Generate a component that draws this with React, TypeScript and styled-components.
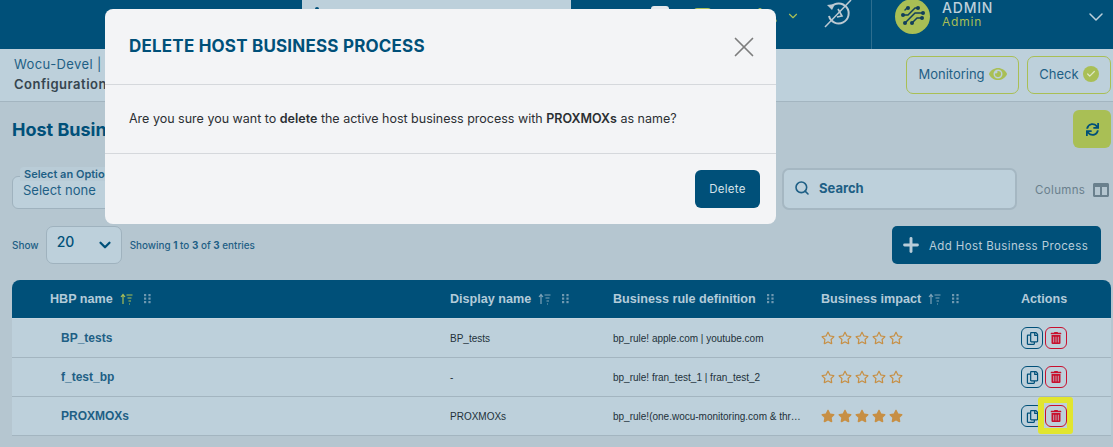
import React from "react";
import styled, { createGlobalStyle } from "styled-components";
import { Check, ChevronDown, Plus, Search, X } from "lucide-react";
import { FaEye, FaRegCopy, FaRegStar, FaStar, FaSync, FaTrashAlt, FaColumns } from "react-icons/fa";

const navy = "#005079";
const lime = "#a9bf55";
const sans = `"Inter", "Liberation Sans", sans-serif`;
const arial = `"Liberation Sans", Arial, sans-serif`;

const GlobalStyle = createGlobalStyle`
  html, body { margin: 0; padding: 0; background: #b5c6d0; }
  body { font-family: ${sans}; overflow: hidden; }
  * { box-sizing: border-box; }
`;

const Page = styled.div`
  position: relative;
  width: 1113px;
  height: 447px;
  overflow: hidden;
`;

const TopBar = styled.header`
  height: 49px;
  background: ${navy};
  display: flex;
  align-items: flex-start;
  padding-left: 302px;
`;

const TopSearch = styled.div`
  width: 269px;
  height: 9px;
  background: #bdd0db;
  margin-right: 80px;
  display: flex;
  align-items: flex-end;
  padding-left: 13px;
`;

const TopSearchIcon = styled.span`
  width: 4px;
  height: 2px;
  border-radius: 2px 2px 0 0;
  background: ${navy};
`;

const TopIcons = styled.div`
  width: 220px;
  height: 49px;
  display: flex;
  align-items: flex-start;
  padding-top: 6px;
  color: ${lime};
`;

const TopSquare = styled.span<{ $color: string; $width: number; $gap: number; $top: number }>`
  width: ${(p) => p.$width}px;
  height: 12px;
  margin-top: ${(p) => p.$top}px;
  margin-right: ${(p) => p.$gap}px;
  border-radius: 3px;
  background: ${(p) => p.$color};
`;

const TopStar = styled.span`
  display: flex;
  margin: 0 8px 0 31px;
`;

const TopChevron = styled.span`
  display: flex;
  margin: 3px 24px 0 0;
`;

const ThresholdIcon = styled.svg`
  width: 28px;
  height: 28px;
  margin-top: -6px;
  color: #bcc9d2;
`;

const UserBox = styled.div`
  width: 242px;
  height: 49px;
  border-left: 1px solid #2d6e8f;
  display: flex;
  align-items: flex-start;
  padding-left: 23px;
`;

const Avatar = styled.div`
  width: 35px;
  height: 35px;
  margin-top: -1px;
  border-radius: 50%;
  background: ${lime};
  display: flex;
`;

const UserText = styled.div`
  margin-left: 12px;
  width: 142px;
  letter-spacing: 0.8px;
`;

const UserName = styled.div`
  font-size: 14px;
  line-height: 15px;
  font-weight: 500;
  color: #bdd0db;
`;

const UserRole = styled.div`
  font-size: 12px;
  line-height: 14px;
  color: ${lime};
`;

const UserChevron = styled.span`
  display: flex;
  margin-top: 5px;
  color: #bdd0db;
`;

const SubHeader = styled.div`
  height: 53px;
  background: #bdd0db;
  border-bottom: 1px solid #a3b5c0;
  display: flex;
  justify-content: space-between;
  padding: 7px 2px 0 14px;
`;

const CrumbTop = styled.div`
  font-size: 13px;
  line-height: 16px;
  color: #1e5f85;
  letter-spacing: 0.4px;
`;

const CrumbBold = styled.div`
  font-size: 13px;
  line-height: 16px;
  margin-top: 4px;
  font-weight: 600;
  color: #36454f;
  letter-spacing: 0.5px;
`;

const HeaderActions = styled.div`
  display: flex;
  gap: 8px;
`;

const OutlineButton = styled.button<{ $width: number }>`
  width: ${(p) => p.$width}px;
  height: 38px;
  border: 1px solid ${lime};
  border-radius: 7px;
  background: transparent;
  display: flex;
  align-items: center;
  justify-content: center;
  gap: 4px;
  padding: 0 0 2px;
  font-family: ${sans};
  font-size: 13px;
  color: #1e5f85;
`;

const CheckDot = styled.span`
  width: 16px;
  height: 16px;
  border-radius: 50%;
  background: ${lime};
  display: flex;
  align-items: center;
  justify-content: center;
  color: #dfe8c5;
`;

const Content = styled.main`
  padding: 8px 2px 0 12px;
`;

const TitleRow = styled.div`
  display: flex;
  justify-content: space-between;
  height: 38px;
`;

const Title = styled.h1`
  margin: 10px 0 0;
  font-size: 18px;
  line-height: 20px;
  font-weight: 700;
  color: ${navy};
`;

const RefreshButton = styled.button`
  width: 38px;
  height: 38px;
  border: 0;
  border-radius: 6px;
  background: ${lime};
  display: flex;
  align-items: center;
  justify-content: center;
  color: ${navy};
  padding: 0;
`;

const FilterRow = styled.div`
  margin-top: 20px;
  height: 42px;
  display: flex;
  align-items: flex-end;
`;

const OptionSelect = styled.div`
  position: relative;
  width: 200px;
  height: 33px;
  margin: 0 570px 1px 0;
  border: 1px solid #9fb2be;
  border-radius: 6px;
  background: #bdd0db;
  padding: 5px 10px;
  font-size: 13px;
  line-height: 16px;
  color: #1e5f85;
`;

const FloatLabel = styled.span`
  position: absolute;
  left: 7px;
  top: -10px;
  padding: 0 4px;
  font-size: 11px;
  line-height: 14px;
  font-weight: 600;
  white-space: nowrap;
  color: #1e5f85;
  background: #b9ccd7;
  border-radius: 4px 4px 0 0;
`;

const SearchBox = styled.div`
  width: 235px;
  height: 42px;
  border: 2px solid #a5b7c2;
  border-radius: 7px;
  background: #bdd0db;
  display: flex;
  align-items: center;
  gap: 9px;
  padding: 0 0 2px 10px;
  font-size: 13px;
  font-weight: 700;
  color: #1e5f85;
  margin-right: 18px;
`;

const ColumnsToggle = styled.div`
  height: 42px;
  display: flex;
  align-items: center;
  gap: 8px;
  padding-top: 2px;
  font-size: 11.5px;
  color: #6a808d;
  letter-spacing: 0.35px;
`;

const ToolRow = styled.div`
  margin-top: 16px;
  height: 38px;
  display: flex;
  align-items: center;
  padding-right: 10px;
`;

const ShowLabel = styled.span`
  font-size: 10px;
  font-weight: 500;
  color: #1e5f85;
  margin-right: 7px;
`;

const PageSize = styled.div`
  width: 76px;
  height: 38px;
  border: 1px solid #9fb2be;
  border-radius: 7px;
  background: #bdd0db;
  display: flex;
  align-items: center;
  justify-content: space-between;
  padding: 0 7px 0 10px;
  font-size: 14px;
  font-weight: 500;
  color: ${navy};
  margin-right: 8px;
`;

const PageSizeValue = styled.span`
  margin-top: -7px;
`;

const Entries = styled.span`
  font-size: 9.9px;
  font-weight: 500;
  color: #1e5f85;
  b {
    font-weight: 700;
  }
`;

const AddButton = styled.button`
  margin-left: auto;
  width: 209px;
  height: 38px;
  border: 0;
  border-radius: 5px;
  background: ${navy};
  display: flex;
  align-items: center;
  gap: 7px;
  padding: 0 0 0 8px;
  font-family: ${sans};
  font-size: 11.5px;
  color: #b9cdd9;
  letter-spacing: 0.38px;
`;

const AddLabel = styled.span`
  margin-top: 2px;
`;

const Table = styled.div`
  margin-top: 16px;
`;

const grid = `
  display: grid;
  grid-template-columns: 438px 163px 208px 200px 90px;
`;

const HeadRow = styled.div`
  ${grid}
  height: 39px;
  align-items: center;
  background: ${navy};
  border-bottom: 1px solid #c5d6e0;
  border-radius: 8px 8px 0 0;
`;

const HeadCell = styled.div<{ $first?: boolean }>`
  display: flex;
  align-items: center;
  padding-left: ${(p) => (p.$first ? 38 : 0)}px;
  font-family: ${arial};
  font-size: 12.6px;
  font-weight: 700;
  color: #b3cbd9;
`;

const SortIcon = styled.svg<{ $active?: boolean }>`
  width: 13px;
  height: 12px;
  margin-left: 7px;
  color: ${(p) => (p.$active ? lime : "#7ea3b8")};
`;

const DragIcon = styled.svg`
  width: 7px;
  height: 10px;
  margin-left: 11px;
  color: #6f99b1;
`;

const Row = styled.div`
  ${grid}
  height: 39px;
  align-items: center;
  background: #bdd0db;
  border-bottom: 1px solid #a3b5c0;
`;

const NameCell = styled.div`
  padding-left: 49px;
  font-family: ${arial};
  font-size: 12px;
  font-weight: 700;
  color: #1e5f85;
`;

const TextCell = styled.div`
  font-family: ${arial};
  font-size: 10px;
  color: #22303a;
`;

const Stars = styled.div`
  display: flex;
  gap: 3px;
  color: #c78f44;
`;

const Actions = styled.div`
  display: flex;
  gap: 2px;
`;

const ActionButton = styled.span<{ $color: string; $flag?: boolean }>`
  position: relative;
  width: 22px;
  height: 22px;
  border: 1px solid ${(p) => p.$color};
  border-radius: 6px;
  color: ${(p) => p.$color};
  display: flex;
  align-items: center;
  justify-content: center;
  ${(p) =>
    p.$flag &&
    `&::before {
      content: "";
      position: absolute;
      left: -8px;
      right: -7px;
      top: -9px;
      bottom: -8px;
      border: 6px solid #e1e52f;
      border-radius: 3px;
    }`}
`;

const Modal = styled.section`
  position: absolute;
  left: 105px;
  top: 9px;
  width: 671px;
  height: 215px;
  border-radius: 8px;
  background: #f3f4f6;
`;

const ModalHead = styled.div`
  height: 76px;
  border-bottom: 1px solid #d5d8dc;
  display: flex;
  justify-content: space-between;
  align-items: center;
  padding: 0 15px 0 24px;
`;

const ModalTitle = styled.h2`
  margin: -2px 0 0;
  font-size: 17px;
  font-weight: 700;
  color: ${navy};
  letter-spacing: 0.2px;
`;

const CloseButton = styled.span`
  display: flex;
  color: #7d7d7d;
`;

const ModalBody = styled.div`
  height: 69px;
  border-bottom: 1px solid #d5d8dc;
  display: flex;
  align-items: center;
  padding: 0 0 2px 24px;
  font-size: 12.5px;
  color: #2b2f33;
  b {
    font-weight: 600;
  }
`;

const ModalFoot = styled.div`
  display: flex;
  justify-content: flex-end;
  padding: 16px 16px 0 0;
`;

const DeleteButton = styled.button`
  width: 65px;
  height: 38px;
  border: 0;
  border-radius: 6px;
  background: ${navy};
  color: #d6e2ea;
  font-family: ${sans};
  font-size: 11.5px;
  letter-spacing: 0.3px;
  padding: 0;
`;

const SortGlyph = ({ active }: { active?: boolean }) => (
  <SortIcon $active={active} viewBox="0 0 13 12" fill="none" stroke="currentColor" strokeWidth="1.2">
    <path d="M3 11V2M1 4l2-2.5L5 4" />
    <path d="M6.5 2h6M7.5 5h4M8.5 8h2.5M9 11h1" />
  </SortIcon>
);

const DragGlyph = () => (
  <DragIcon viewBox="0 0 7 10" fill="currentColor">
    {[0, 3.5, 7].map((y) => (
      <React.Fragment key={y}>
        <rect x="0" y={y} width="2.2" height="2.2" />
        <rect x="4.4" y={y} width="2.2" height="2.2" />
      </React.Fragment>
    ))}
  </DragIcon>
);

const Logo = () => (
  <svg width="35" height="35" viewBox="0 0 35 35" fill="none" stroke="#123f5b" strokeWidth="1.5" strokeLinecap="round" strokeLinejoin="round">
    <path d="M8 16h5l7-7h3" />
    <path d="M10 24l10-10h8" />
    <path d="M17 24l5-5h5" />
    <path d="M12 9l-2 2" />
    <g fill="#123f5b" stroke="none">
      <circle cx="13" cy="9" r="2" />
      <circle cx="23" cy="9" r="2" />
      <circle cx="28" cy="14" r="2" />
      <circle cx="8" cy="16" r="2" />
      <circle cx="10" cy="24" r="2" />
      <circle cx="17" cy="24" r="2" />
      <circle cx="27" cy="19" r="2" />
    </g>
  </svg>
);

const rows = [
  { name: "BP_tests", display: "BP_tests", rule: "bp_rule! apple.com | youtube.com", filled: false },
  { name: "f_test_bp", display: "-", rule: "bp_rule! fran_test_1 | fran_test_2", filled: false },
  { name: "PROXMOXs", display: "PROXMOXs", rule: "bp_rule!(one.wocu-monitoring.com & thr…", filled: true },
];

export default function App() {
  return (
    <Page>
      <GlobalStyle />
      <TopBar>
        <TopSearch>
          <TopSearchIcon />
        </TopSearch>
        <TopIcons>
          <TopSquare $color="#e6e9ec" $width={18} $gap={25} $top={0} />
          <TopSquare $color={lime} $width={17} $gap={0} $top={2} />
          <TopStar>
            <FaStar size={36} />
          </TopStar>
          <TopChevron>
            <ChevronDown size={14} />
          </TopChevron>
          <ThresholdIcon viewBox="0 0 28 28" fill="none" stroke="currentColor" strokeWidth="2">
            <path d="M7 7a10 10 0 1 1-2 9" />
            <path d="M3 5l5 5 3-6z" fill="currentColor" stroke="none" />
            <path d="M14 9l4 7-5 1" strokeWidth="1.6" />
            <path d="M1 27L27 0" strokeWidth="1.5" />
          </ThresholdIcon>
        </TopIcons>
        <UserBox>
          <Avatar>
            <Logo />
          </Avatar>
          <UserText>
            <UserName>ADMIN</UserName>
            <UserRole>Admin</UserRole>
          </UserText>
          <UserChevron>
            <ChevronDown size={24} strokeWidth={1.5} />
          </UserChevron>
        </UserBox>
      </TopBar>
      <SubHeader>
        <div>
          <CrumbTop>Wocu-Devel | Configuration</CrumbTop>
          <CrumbBold>Configuration</CrumbBold>
        </div>
        <HeaderActions>
          <OutlineButton $width={113}>
            Monitoring <FaEye size={18} color={lime} />
          </OutlineButton>
          <OutlineButton $width={84}>
            Check
            <CheckDot>
              <Check size={10} strokeWidth={3} />
            </CheckDot>
          </OutlineButton>
        </HeaderActions>
      </SubHeader>
      <Content>
        <TitleRow>
          <Title>Host Business Processes</Title>
          <RefreshButton>
            <FaSync size={13} />
          </RefreshButton>
        </TitleRow>
        <FilterRow>
          <OptionSelect>
            <FloatLabel>Select an Option</FloatLabel>
            Select none
          </OptionSelect>
          <SearchBox>
            <Search size={16} strokeWidth={2.4} />
            Search
          </SearchBox>
          <ColumnsToggle>
            Columns <FaColumns size={16} />
          </ColumnsToggle>
        </FilterRow>
        <ToolRow>
          <ShowLabel>Show</ShowLabel>
          <PageSize>
            <PageSizeValue>20</PageSizeValue>
            <ChevronDown size={18} strokeWidth={3} />
          </PageSize>
          <Entries>
            Showing <b>1</b> to <b>3</b> of <b>3</b> entries
          </Entries>
          <AddButton>
            <Plus size={22} strokeWidth={3.2} />
            <AddLabel>Add Host Business Process</AddLabel>
          </AddButton>
        </ToolRow>
        <Table>
          <HeadRow>
            <HeadCell $first>
              HBP name <SortGlyph active />
              <DragGlyph />
            </HeadCell>
            <HeadCell>
              Display name <SortGlyph />
              <DragGlyph />
            </HeadCell>
            <HeadCell>
              Business rule definition <DragGlyph />
            </HeadCell>
            <HeadCell>
              Business impact <SortGlyph />
              <DragGlyph />
            </HeadCell>
            <HeadCell>Actions</HeadCell>
          </HeadRow>
          {rows.map((row) => (
            <Row key={row.name}>
              <NameCell>{row.name}</NameCell>
              <TextCell>{row.display}</TextCell>
              <TextCell>{row.rule}</TextCell>
              <Stars>
                {[1, 2, 3, 4, 5].map((n) =>
                  row.filled ? <FaStar key={n} size={14} /> : <FaRegStar key={n} size={14} />
                )}
              </Stars>
              <Actions>
                <ActionButton $color="#005079">
                  <FaRegCopy size={13} />
                </ActionButton>
                <ActionButton $color="#c8102e" $flag={row.filled}>
                  <FaTrashAlt size={12} />
                </ActionButton>
              </Actions>
            </Row>
          ))}
        </Table>
      </Content>
      <Modal>
        <ModalHead>
          <ModalTitle>DELETE HOST BUSINESS PROCESS</ModalTitle>
          <CloseButton>
            <X size={34} strokeWidth={1.2} />
          </CloseButton>
        </ModalHead>
        <ModalBody>
          <span>
            Are you sure you want to <b>delete</b> the active host business process with <b>PROXMOXs</b> as name?
          </span>
        </ModalBody>
        <ModalFoot>
          <DeleteButton>Delete</DeleteButton>
        </ModalFoot>
      </Modal>
    </Page>
  );
}
